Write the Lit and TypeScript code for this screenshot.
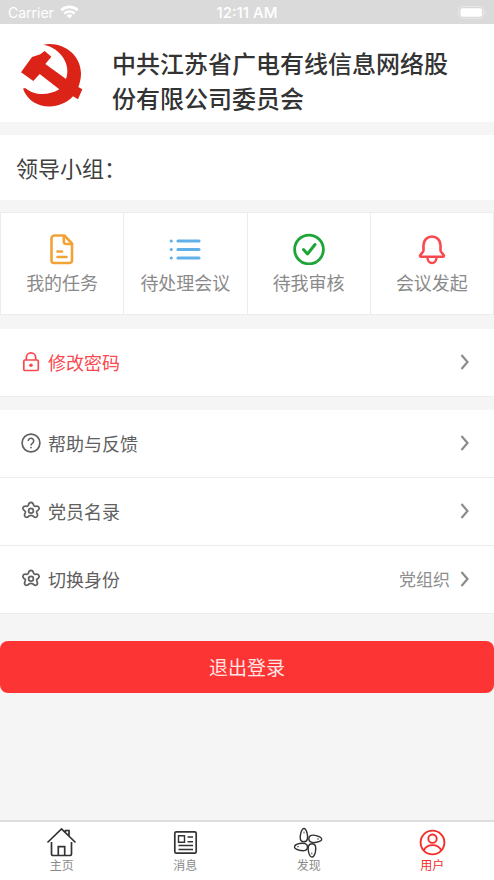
import { LitElement, html, css, svg, nothing, TemplateResult } from "lit";
import { customElement, property } from "lit/decorators.js";
import { classMap } from "lit/directives/class-map.js";

const icons: Record<string, TemplateResult> = {
  doc: svg`<g stroke-width="2.6"><path d="M8.5 2.500h10l7.500 8v17a2.500 2.500 0 0 1-2.500 2.500H8a2.500 2.500 0 0 1-2.500-2.500V5.500A3 3 0 0 1 8.500 2.500z"/><path d="M17.800 3v5.500a2.500 2.500 0 0 0 2.500 2.500h5.500"/><path d="M11.500 18.500h4.500M11.500 24h9" stroke-linecap="round"/></g>`,
  list: svg`<g stroke-width="3.2" stroke-linecap="round"><path d="M9 8h21M9 16.500h21M9 25h21"/><path d="M2.200 8h.1M2.200 16.500h.1M2.200 25h.1" stroke-width="3"/></g>`,
  check: svg`<circle cx="16" cy="16.500" r="14.400" stroke-width="2.800"/><path d="M10.500 16.500l4 4.500 7.500-9.500" stroke-width="3" stroke-linecap="round" stroke-linejoin="round"/>`,
  bell: svg`<path d="M7.500 17.500v-5.500a8.500 8.500 0 0 1 17 0v5.500c0 2 3.500 4 3.500 5.200 0 .7-.4 1.100-1 1.100H5c-.6 0-1-.4-1-1.100 0-1.200 3.500-3.200 3.500-5.200z" stroke-width="2.600"/><path d="M11.500 24.500a4.500 5.500 0 0 0 9 0" stroke-width="2.400"/>`,
  lock: svg`<rect x="2.800" y="8" width="14.500" height="10.500" rx="1.200" stroke-width="1.700"/><path d="M5.300 8V5.600a4.700 4.700 0 0 1 9.400 0V8" stroke-width="1.700"/><circle cx="10" cy="13.200" r="1.800" fill="currentColor" stroke="none"/>`,
  help: svg`<circle cx="10" cy="10" r="8.900" stroke-width="1.700"/><path d="M7.300 8a2.700 2.700 0 1 1 4.300 2.100c-1 .7-1.600 1.100-1.600 2.300" stroke-width="1.600"/><circle cx="10" cy="14.600" r=".9" fill="currentColor" stroke="none"/>`,
  gear: svg`<path d="M7.200 4.600C7.600 2.500 8.700 1.400 10 1.400s2.400 1.100 2.800 3.200c.3.500.7.700 1.200.7 2.200-.4 3.700.1 4.100 1.400.4 1.200-.4 2.400-2.200 3.500-.4.400-.4.900-.2 1.400 1 1.900 1 3.500 0 4.300-1.100.8-2.600.4-4.200-1.200-.9-.5-2.100-.5-3 0-1.600 1.600-3.100 2-4.200 1.200-1-.8-1-2.400 0-4.300.2-.5.200-1-.2-1.400C2.300 9.100 1.500 7.900 1.900 6.700 2.300 5.400 3.800 4.900 6 5.300c.5 0 .9-.2 1.200-.7z" stroke-width="1.700"/><circle cx="10" cy="9.800" r="2.400" stroke-width="1.700"/>`,
  home: svg`<path d="M1.500 15.500L15.500 2l14 13.500M5.500 15v11.800c0 1 .5 1.700 1.700 1.700h16.600c1.200 0 1.700-.7 1.700-1.700V15M12.300 28v-8.300h6.400V28M19.500 5V3.500h3.500v5.500" stroke-width="1.700"/>`,
  news: svg`<rect x="4.800" y="4.800" width="21.400" height="21.400" rx="1.500" stroke-width="1.700"/><path d="M8.500 8.800h6v6.400h-6zM17.500 10h5.500M17.500 14.800h5.500M8.500 18.500h14.500M8.500 22.500h14.500" stroke-width="1.400"/>`,
  petals: svg`<g stroke-width="1.400"><path d="M9.200 15.300c4.300 0 4.500-4.500 3.300-9C11.600 3.200 10.500 2 9.500 2 8.300 2 7 4 6.200 7c-1 4.300-.8 8.300 3 8.300z" transform="translate(1.500 -.5)"/><path d="M15.800 11.800c0 3.600 3.800 4.300 7.600 3.500 3.200-.6 5.300-1.800 5.300-3s-1.600-2.600-4.600-3.500c-4.500-1.300-8.300-.8-8.300 3z"/><path d="M14.500 20c0-3.600-4-4.300-8-3.500-3.400.7-5 2.300-5 3.500s2 2.500 5 3.300c4.500 1 8 .5 8-3.300z"/><path d="M19.200 16.800c-4.300 0-4.700 4.500-3.500 8.800.9 3.100 2.200 4.400 3.200 4.400 1.200 0 2.600-1.500 3.400-4.500 1-4.400.7-8.700-3.100-8.700z"/><path d="M11 4.500v2M26 12h-2M4 19.700h2M18.800 27.500v-2" stroke-width=".8"/></g>`,
  user: svg`<circle cx="15.500" cy="15.500" r="11.900" stroke-width="1.900"/><circle cx="15.500" cy="11.700" r="4.200" stroke-width="1.900"/><path d="M6.800 23.300c1.500-3.200 5-5.200 8.700-5.200s7.200 2 8.700 5.200" stroke-width="1.900"/>`,
};

const icon = (name: string, box: number, cls: string) => html`
  <svg class=${cls} viewBox="0 0 ${box} ${box}" fill="none" stroke="currentColor" aria-hidden="true">${icons[name]}</svg>`;

const shared = css`
  * { box-sizing: border-box; }
  button {
    font: inherit;
    color: inherit;
    border: 0;
    margin: 0;
    padding: 0;
    background: none;
    cursor: pointer;
  }
`;

@customElement("menu-row")
export class MenuRow extends LitElement {
  @property() icon = "";
  @property() label = "";
  @property() value = "";
  @property({ type: Boolean }) alert = false;

  static styles = [shared, css`
    :host { display: block; background: #fff; border-bottom: 1px solid #ececec; }
    .row {
      display: flex;
      align-items: center;
      width: 100%;
      height: 67px;
      padding: 0 24px 2px 21px;
      color: #606060;
      font-size: 18px;
      text-align: left;
    }
    .alert { color: #f9494f; }
    .icon { width: 20px; height: 20px; margin-right: 7px; flex: none; }
    .label { flex: 1; }
    .value { color: #8e8e8e; font-size: 17px; margin-right: 10px; }
    .arrow { width: 10px; height: 18px; flex: none; color: #8c8c8c; }
  `];

  render() {
    return html`
      <button class=${classMap({ row: true, alert: this.alert })}>
        ${icon(this.icon, 20, "icon")}
        <span class="label">${this.label}</span>
        ${this.value ? html`<span class="value">${this.value}</span>` : nothing}
        <svg class="arrow" viewBox="0 0 10 18" fill="none" stroke="currentColor" stroke-width="2.2" aria-hidden="true"><path d="M1.500 2l6 7-6 7"/></svg>
      </button>`;
  }
}

const shortcuts = [
  { icon: "doc", label: "我的任务", tone: "orange" },
  { icon: "list", label: "待处理会议", tone: "blue" },
  { icon: "check", label: "待我审核", tone: "green" },
  { icon: "bell", label: "会议发起", tone: "red" },
];

const tabs = [
  { icon: "home", label: "主页", active: false },
  { icon: "news", label: "消息", active: false },
  { icon: "petals", label: "发现", active: false },
  { icon: "user", label: "用户", active: true },
];

@customElement("app-root")
export class AppRoot extends LitElement {
  static styles = [shared, css`
    :host {
      display: flex;
      flex-direction: column;
      min-height: 100vh;
      background: #f5f5f5;
      font-family: "Liberation Sans", "Noto Sans CJK SC", sans-serif;
    }
    .status {
      display: grid;
      grid-template-columns: 1fr auto 1fr;
      align-items: center;
      height: 24px;
      padding: 0 8px;
      background: #dadada;
      color: #fff;
      font-family: Inter, "Liberation Sans", sans-serif;
      font-size: 14px;
    }
    .carrier { display: flex; align-items: center; gap: 6px; }
    .wifi { width: 19px; height: 14px; }
    .time { font-size: 15px; font-weight: 500; }
    .battery { width: 28px; height: 13px; justify-self: end; }
    .profile {
      display: flex;
      align-items: flex-start;
      gap: 17px;
      min-height: 98px;
      padding: 0 40px 2px 10px;
      background: #fff;
    }
    .logo { width: 85px; height: 85px; margin-top: 11px; flex: none; }
    .name {
      flex: 1;
      margin: 0;
      padding-top: 23px;
      color: #333;
      font-size: 24px;
      font-weight: 500;
      line-height: 35px;
    }
    .group {
      display: flex;
      align-items: center;
      height: 65px;
      margin: 13px 0 12px;
      padding: 0 16px 2px;
      background: #fff;
      color: #404040;
      font-size: 22px;
    }
    .shortcuts {
      display: grid;
      grid-template-columns: repeat(4, 1fr);
      gap: 1px;
      margin-bottom: 14px;
      padding: 1px;
      background: #ececec;
    }
    .shortcut {
      display: flex;
      flex-direction: column;
      align-items: center;
      height: 101px;
      padding-top: 20px;
      gap: 6px;
      background: #fff;
    }
    .shortcut-icon { width: 32px; height: 32px; }
    .shortcut-label { color: #8a8a8a; font-size: 18px; line-height: 26px; }
    .orange { color: #f3a238; }
    .blue { color: #62b0e8; }
    .green { color: #1ea538; }
    .red { color: #f9494f; }
    .rows { margin-bottom: 13px; }
    .logout {
      height: 52px;
      margin-top: 14px;
      padding-bottom: 2px;
      border-radius: 8px;
      background: #fd3434;
      color: #ffe6e6;
      font-size: 19px;
    }
    .tabs {
      display: grid;
      grid-template-columns: repeat(4, 1fr);
      height: 60px;
      margin-top: auto;
      border-top: 2px solid #dedede;
      background: #fff;
    }
    .tab {
      display: flex;
      flex-direction: column;
      align-items: center;
      padding-top: 5px;
      color: #8a8a8a;
      font-size: 12px;
      line-height: 16px;
      text-decoration: none;
    }
    .tab-icon { width: 31px; height: 31px; color: #333; }
    .active, .active .tab-icon { color: #f52c28; }
  `];

  render() {
    return html`
      <div class="status">
        <span class="carrier">Carrier
          <svg class="wifi" viewBox="0 0 19 14" fill="none" stroke="#fff" stroke-width="2.6" aria-hidden="true">
            <path d="M1.200 5.200a12 12 0 0 1 16.600 0M4.300 8.600a7.500 7.500 0 0 1 10.400 0"/>
            <path d="M9.500 13.500l-2.900-2.900a4.200 4.200 0 0 1 5.800 0z" fill="#fff" stroke="none"/>
          </svg>
        </span>
        <span class="time">12:11 AM</span>
        <svg class="battery" viewBox="0 0 28 13" aria-hidden="true">
          <rect x=".5" y=".5" width="25" height="12" rx="3.5" fill="none" stroke="#e6e6e6"/>
          <rect x="2.5" y="2.300" width="21.5" height="8.400" rx="2" fill="#fff"/>
          <path d="M26.500 4.500a2.300 2.300 0 0 1 0 4z" fill="#e6e6e6"/>
        </svg>
      </div>
      <header class="profile">
        <svg class="logo" viewBox="0 0 255 255" fill="#dc2318" aria-hidden="true">
          <path d="M100 29C157 18 212 58 213 115c0 15-3 28-8 41l12 7-13 30-15-9C145 231 62 224 39 161l6-2c26 21 66 26 103 4L89 117 70 138 33 112 66 66l25-8 13-10 20 17-18 22 62 45C184 91 154 39 100 29z"/>
        </svg>
        <h1 class="name">中共江苏省广电有线信息网络股份有限公司委员会</h1>
      </header>
      <section class="group">领导小组：</section>
      <section class="shortcuts">
        ${shortcuts.map((s) => html`
          <button class="shortcut">
            ${icon(s.icon, 32, `shortcut-icon ${s.tone}`)}
            <span class="shortcut-label">${s.label}</span>
          </button>`)}
      </section>
      <section class="rows">
        <menu-row icon="lock" label="修改密码" alert></menu-row>
      </section>
      <section class="rows">
        <menu-row icon="help" label="帮助与反馈"></menu-row>
        <menu-row icon="gear" label="党员名录"></menu-row>
        <menu-row icon="gear" label="切换身份" value="党组织"></menu-row>
      </section>
      <button class="logout">退出登录</button>
      <nav class="tabs">
        ${tabs.map((t) => html`
          <a href="#" class=${classMap({ tab: true, active: t.active })}>
            ${icon(t.icon, 31, "tab-icon")}
            <span>${t.label}</span>
          </a>`)}
      </nav>`;
  }
}
